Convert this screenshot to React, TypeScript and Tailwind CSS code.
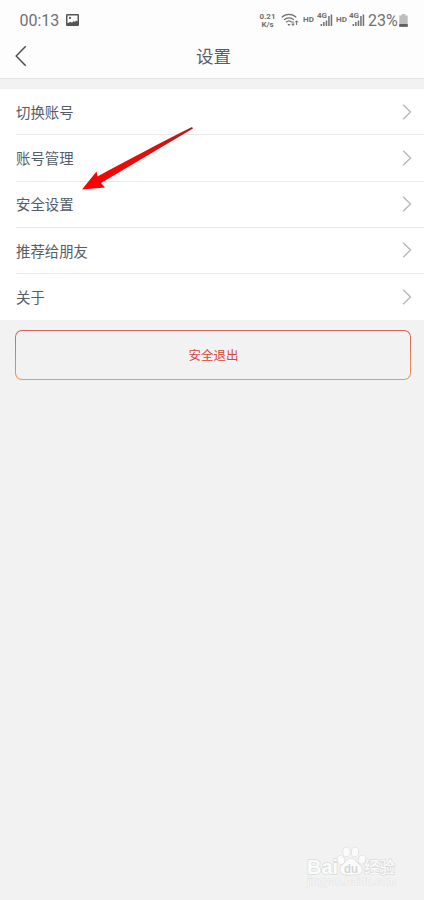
import type { ReactNode } from 'react';

const menuItems = ['切换账号', '账号管理', '安全设置', '推荐给朋友', '关于'];

const Signal = () => (
  <div className="relative h-[14px] w-[16px]">
    <span className="absolute -top-px left-0 text-[8px] leading-[8px] font-bold">4G</span>
    <svg className="absolute inset-0" width="16" height="14" viewBox="0 0 16 14" fill="currentColor">
      <rect x="3.6" y="11" width="1.5" height="2" />
      <rect x="6.1" y="9" width="1.5" height="4" />
      <rect x="8.7" y="7.5" width="1.5" height="5.5" />
      <rect x="11.2" y="3" width="1.5" height="10" />
      <rect x="13.7" y="1.5" width="1.5" height="11.5" />
    </svg>
  </div>
);

const StatusBar = () => (
  <div className="flex h-[38px] items-center pt-[2px] pr-[16px] pl-[19.5px] font-['Roboto',sans-serif] text-[#707070]">
    <span className="pt-px text-[16px] leading-none">00:13</span>
    <svg className="ml-[6.5px]" width="13" height="12" viewBox="0 0 13 12">
      <rect width="13" height="12" rx="1.2" fill="#555" />
      <path d="M1.5 1.4h10v6.200l-1.200-1-1.400 1.400-1.200-1-1.700 1.800-1.500-1.100-3 1.600z" fill="#fff" />
      <circle cx="4" cy="3.9" r="1.1" fill="#555" />
    </svg>
    <div className="ml-auto flex items-center">
      <div className="flex w-[17px] flex-col items-center gap-[1px] text-[8px] leading-[8px] font-bold whitespace-nowrap">
        <div className="h-[7px] leading-[7px]">0.21</div>
        <div className="h-[7px] leading-[7px]">K/s</div>
      </div>
      <svg className="ml-[5px]" width="18" height="14" viewBox="0 0 18 14" fill="none" stroke="currentColor" strokeWidth="1.3">
        <path d="M.8 4.400C4.800.4 11.200.4 15.200 4.400" />
        <path d="M3 6.900C5.800 4.100 10.200 4.100 13 6.900" />
        <path d="M5.200 9.300C6.800 7.700 9.200 7.700 10.800 9.300" />
        <path d="M6.200 10.800L8 13l1.500-1.800z" fill="currentColor" stroke="none" />
        <path d="M12 8.200v4.200M10.500 10.800l1.500 1.600 1.500-1.600M15.600 12V7.800M14.100 9.400l1.500-1.600 1.500 1.600" strokeWidth="1" />
      </svg>
      <span className="ml-[4px] w-[12px] text-[8px] leading-none font-bold">HD</span>
      <div className="ml-[2px]"><Signal /></div>
      <span className="ml-[3px] w-[12px] text-[8px] leading-none font-bold">HD</span>
      <div className="ml-[1px]"><Signal /></div>
      <span className="ml-[3px] w-[31px] pt-px text-[16px] leading-none">23%</span>
      <svg width="9" height="13" viewBox="0 0 9 13">
        <path d="M2.700 0h3.600v1.400H8.700V13H.3V1.400h2.400z" fill="#bdbdbd" />
        <rect x=".3" y="10" width="8.4" height="2.8" fill="#606060" />
      </svg>
    </div>
  </div>
);

const MenuRow = ({ children, last }: { children: ReactNode; last: boolean }) => (
  <li className="h-[46.25px] pl-[16px]">
    <div className={`flex h-full items-center justify-between pr-[12px] ${last ? '' : 'border-b border-[#e9e9e9]'}`}>
      <span className="pt-px text-[14.4px] leading-none">{children}</span>
      <svg width="10" height="16" viewBox="0 0 10 16" fill="none" stroke="#b5b5b5" strokeWidth="1.3">
        <path d="M1.200.8L8.500 8l-7.300 7.200" />
      </svg>
    </div>
  </li>
);

const Watermark = () => (
  <svg
    className="absolute top-[844px] left-[304px] font-['Liberation_Sans','Noto_Sans_CJK_SC',sans-serif]"
    width="98"
    height="46"
    viewBox="0 0 98 46"
    fill="#fbfbfb"
    stroke="#dadada"
    strokeWidth="1.4"
    strokeLinejoin="round"
    paintOrder="stroke"
  >
    <text x="3" y="29.500" fontSize="19.500" textLength="31" fontWeight="700" lengthAdjust="spacingAndGlyphs">Bai</text>
    <ellipse cx="37" cy="16" rx="3.300" ry="4.200" transform="rotate(-20 37 16)" />
    <ellipse cx="42.500" cy="8" rx="3.400" ry="4.500" />
    <ellipse cx="51" cy="8" rx="3.400" ry="4.500" transform="rotate(10 51 8)" />
    <ellipse cx="58" cy="15.500" rx="3.300" ry="4.200" transform="rotate(20 58 15.500)" />
    <path d="M47 14.500c-4 0-5 4-8.500 6.500-3.500 3-3 9 2.500 9.500 3 .2 9 .2 12 0 6-.5 6-6.500 2.500-9.500C52 18.500 51 14.500 47 14.500z" />
    <text x="40" y="28.500" fontSize="13" fontWeight="700" textLength="14" lengthAdjust="spacingAndGlyphs" fill="#d6d6d6" stroke="none">du</text>
    <text x="60" y="29" fontSize="16" fontWeight="500" textLength="31" lengthAdjust="spacingAndGlyphs">经验</text>
    <text x="3" y="41" fontSize="10" textLength="89" lengthAdjust="spacingAndGlyphs" fill="#f8f8f8" stroke="#e4e4e4" strokeWidth="1">jingyan.baidu.com</text>
  </svg>
);

export default function App() {
  return (
    <div className="relative h-[900px] w-[424px] overflow-hidden bg-[#f2f2f2] font-['Noto_Sans_CJK_SC',sans-serif] text-[#555d66]">
      <header className="h-[79px] border-b border-[#e2e2e2] bg-[#fdfdfd]">
        <StatusBar />
        <div className="grid h-[36px] grid-cols-[1fr_auto_1fr] items-center pr-[12px] pl-[15px]">
          <svg width="12" height="22" viewBox="0 0 12 22" fill="none" stroke="#505050" strokeWidth="1.5">
            <path d="M10.700 1.200L1.200 11l9.500 9.800" />
          </svg>
          <h1 className="text-[17.5px] leading-none">设置</h1>
        </div>
      </header>

      <ul className="mt-[10px] bg-white">
        {menuItems.map((item, i) => (
          <MenuRow key={item} last={i === menuItems.length - 1}>{item}</MenuRow>
        ))}
      </ul>

      <div className="mt-[9.75px] mr-[13px] ml-[15px] h-[50px] rounded-[7px] bg-linear-to-b from-[#d95f5b] to-[#eb9860] p-px">
        <button className="flex h-full w-full items-center justify-center rounded-[6px] bg-[#f2f2f2] pl-px text-[12.5px] leading-none text-[#d4483a]">
          安全退出
        </button>
      </div>

      {/* arrow pointing at the security settings row */}
      <svg className="absolute top-[120px] left-[76px]" width="124" height="76" viewBox="0 0 124 76">
        <defs>
          <linearGradient id="arrow" x1="1" y1="0" x2="0" y2="1">
            <stop offset="0" stopColor="#b01c1c" />
            <stop offset=".45" stopColor="#e80c0c" />
            <stop offset="1" stopColor="#ff0000" />
          </linearGradient>
        </defs>
        <path d="M116 7L117 8.500L25 63L29 67.500L6 69.500L20.500 51.500L21.500 56.500C50 41 84 23 116 7z" fill="url(#arrow)" />
      </svg>

      <Watermark />
    </div>
  );
}
